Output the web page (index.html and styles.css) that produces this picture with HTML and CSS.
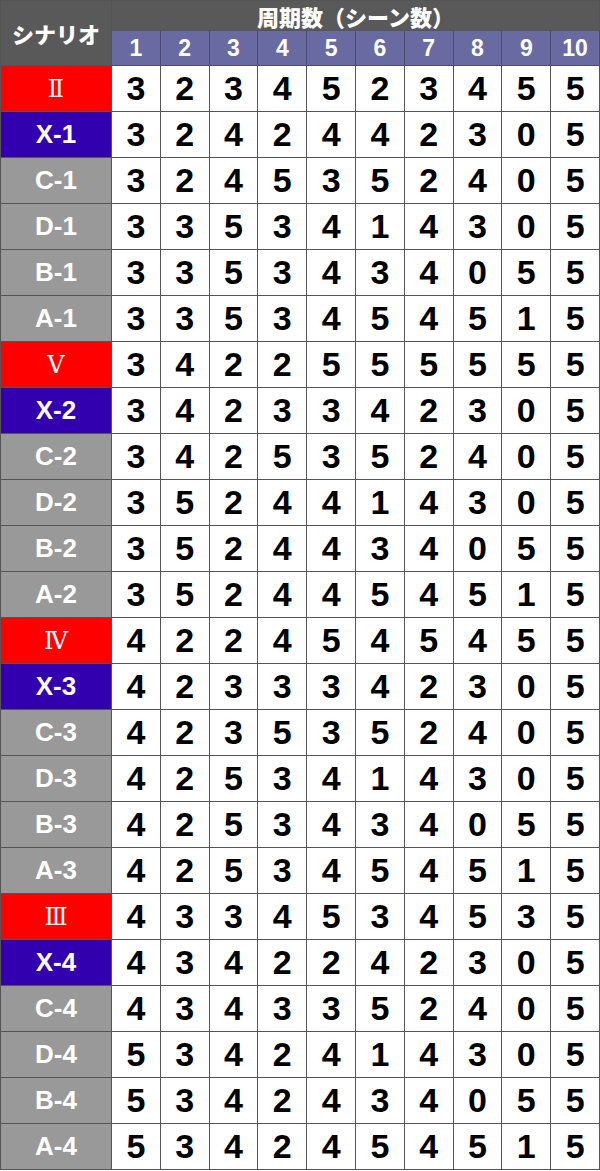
FILE: index.html
```html
<!DOCTYPE html>
<html lang="ja">
<head>
<meta charset="utf-8">
<title>シナリオ 周期数</title>
<link rel="stylesheet" href="styles.css">
</head>
<body>
<table class="tbl">
<colgroup><col class="c-label"><col span="10"></colgroup>
<thead>
<tr class="h1"><th rowspan="2" class="corner">シナリオ</th><th colspan="10" class="title">周期数（シーン数）</th></tr>
<tr class="h2"><th>1</th><th>2</th><th>3</th><th>4</th><th>5</th><th>6</th><th>7</th><th>8</th><th>9</th><th>10</th></tr>
</thead>
<tbody>
<tr><th class="lb red roman">Ⅱ</th><td>3</td><td>2</td><td>3</td><td>4</td><td>5</td><td>2</td><td>3</td><td>4</td><td>5</td><td>5</td></tr>
<tr><th class="lb blue">X-1</th><td>3</td><td>2</td><td>4</td><td>2</td><td>4</td><td>4</td><td>2</td><td>3</td><td>0</td><td>5</td></tr>
<tr><th class="lb gray">C-1</th><td>3</td><td>2</td><td>4</td><td>5</td><td>3</td><td>5</td><td>2</td><td>4</td><td>0</td><td>5</td></tr>
<tr><th class="lb gray">D-1</th><td>3</td><td>3</td><td>5</td><td>3</td><td>4</td><td>1</td><td>4</td><td>3</td><td>0</td><td>5</td></tr>
<tr><th class="lb gray">B-1</th><td>3</td><td>3</td><td>5</td><td>3</td><td>4</td><td>3</td><td>4</td><td>0</td><td>5</td><td>5</td></tr>
<tr><th class="lb gray">A-1</th><td>3</td><td>3</td><td>5</td><td>3</td><td>4</td><td>5</td><td>4</td><td>5</td><td>1</td><td>5</td></tr>
<tr><th class="lb red roman">Ⅴ</th><td>3</td><td>4</td><td>2</td><td>2</td><td>5</td><td>5</td><td>5</td><td>5</td><td>5</td><td>5</td></tr>
<tr><th class="lb blue">X-2</th><td>3</td><td>4</td><td>2</td><td>3</td><td>3</td><td>4</td><td>2</td><td>3</td><td>0</td><td>5</td></tr>
<tr><th class="lb gray">C-2</th><td>3</td><td>4</td><td>2</td><td>5</td><td>3</td><td>5</td><td>2</td><td>4</td><td>0</td><td>5</td></tr>
<tr><th class="lb gray">D-2</th><td>3</td><td>5</td><td>2</td><td>4</td><td>4</td><td>1</td><td>4</td><td>3</td><td>0</td><td>5</td></tr>
<tr><th class="lb gray">B-2</th><td>3</td><td>5</td><td>2</td><td>4</td><td>4</td><td>3</td><td>4</td><td>0</td><td>5</td><td>5</td></tr>
<tr><th class="lb gray">A-2</th><td>3</td><td>5</td><td>2</td><td>4</td><td>4</td><td>5</td><td>4</td><td>5</td><td>1</td><td>5</td></tr>
<tr><th class="lb red roman">Ⅳ</th><td>4</td><td>2</td><td>2</td><td>4</td><td>5</td><td>4</td><td>5</td><td>4</td><td>5</td><td>5</td></tr>
<tr><th class="lb blue">X-3</th><td>4</td><td>2</td><td>3</td><td>3</td><td>3</td><td>4</td><td>2</td><td>3</td><td>0</td><td>5</td></tr>
<tr><th class="lb gray">C-3</th><td>4</td><td>2</td><td>3</td><td>5</td><td>3</td><td>5</td><td>2</td><td>4</td><td>0</td><td>5</td></tr>
<tr><th class="lb gray">D-3</th><td>4</td><td>2</td><td>5</td><td>3</td><td>4</td><td>1</td><td>4</td><td>3</td><td>0</td><td>5</td></tr>
<tr><th class="lb gray">B-3</th><td>4</td><td>2</td><td>5</td><td>3</td><td>4</td><td>3</td><td>4</td><td>0</td><td>5</td><td>5</td></tr>
<tr><th class="lb gray">A-3</th><td>4</td><td>2</td><td>5</td><td>3</td><td>4</td><td>5</td><td>4</td><td>5</td><td>1</td><td>5</td></tr>
<tr><th class="lb red roman">Ⅲ</th><td>4</td><td>3</td><td>3</td><td>4</td><td>5</td><td>3</td><td>4</td><td>5</td><td>3</td><td>5</td></tr>
<tr><th class="lb blue">X-4</th><td>4</td><td>3</td><td>4</td><td>2</td><td>2</td><td>4</td><td>2</td><td>3</td><td>0</td><td>5</td></tr>
<tr><th class="lb gray">C-4</th><td>4</td><td>3</td><td>4</td><td>3</td><td>3</td><td>5</td><td>2</td><td>4</td><td>0</td><td>5</td></tr>
<tr><th class="lb gray">D-4</th><td>5</td><td>3</td><td>4</td><td>2</td><td>4</td><td>1</td><td>4</td><td>3</td><td>0</td><td>5</td></tr>
<tr><th class="lb gray">B-4</th><td>5</td><td>3</td><td>4</td><td>2</td><td>4</td><td>3</td><td>4</td><td>0</td><td>5</td><td>5</td></tr>
<tr><th class="lb gray">A-4</th><td>5</td><td>3</td><td>4</td><td>2</td><td>4</td><td>5</td><td>4</td><td>5</td><td>1</td><td>5</td></tr>
</tbody>
</table>
</body>
</html>
```
FILE: styles.css
```css
html, body {
  margin: 0;
  padding: 0;
  background: #ffffff;
}
.tbl {
  width: 600px;
  border-collapse: collapse;
  table-layout: fixed;
  font-family: "Liberation Sans", Arial, "Noto Sans CJK JP", sans-serif;
  font-weight: bold;
}
.c-label {
  width: 111px;
}
.tbl th, .tbl td {
  padding: 0;
  text-align: center;
  vertical-align: middle;
  border: 1px solid #555555;
}
.corner {
  background: #595959;
  color: #ffffff;
  font-size: 22px;
  font-family: "Noto Sans CJK JP", sans-serif;
  font-weight: 900;
  border-color: #777777;
}
.title {
  background: #595959;
  color: #ffffff;
  font-size: 22px;
  font-family: "Noto Sans CJK JP", sans-serif;
  font-weight: 900;
  border-color: #777777;
}
.h1 {
  height: 30px;
}
.h1 .title {
  line-height: 26px;
}
.h2 {
  height: 35px;
}
.h2 th {
  background: #6a6aa2;
  color: #ffffff;
  font-size: 23px;
  border-color: #4a4a72;
}
tbody tr {
  height: 46px;
}
tbody td {
  font-size: 34px;
  color: #000000;
  border-color: #6d6d6d;
}
.lb {
  color: #ffffff;
  font-size: 26px;
  border-color: #7a7a7a;
}
.red {
  background: #ff0000;
}
.blue {
  background: #3300b0;
}
.gray {
  background: #999999;
}
.roman {
  font-family: "DejaVu Serif", "Liberation Serif", serif;
  font-weight: normal;
  font-size: 24px;
}
```
